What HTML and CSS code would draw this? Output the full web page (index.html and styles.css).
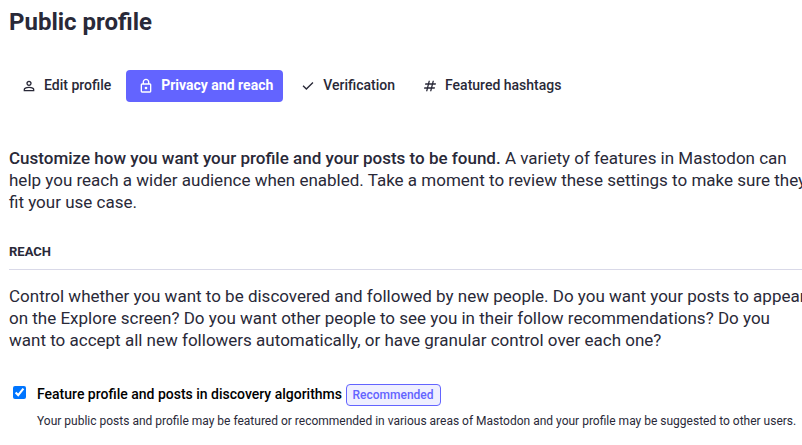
FILE: index.html
```html
<!doctype html>
<html lang="en">
<head>
<meta charset="utf-8">
<title>Public profile - Mastodon</title>
<link rel="stylesheet" href="styles.css">
</head>
<body>
<main class="content">
	<h1>Public profile</h1>
	<nav class="tabs">
		<a href="#profile"><svg viewBox="0 -960 960 960"><path d="M480-480q-66 0-113-47t-47-113q0-66 47-113t113-47q66 0 113 47t47 113q0 66-47 113t-113 47ZM160-160v-112q0-34 17.500-62.500T224-378q62-31 126-46.500T480-440q66 0 130 15.500T736-378q29 15 46.500 43.500T800-272v112H160Zm80-80h480v-32q0-11-5.500-20T700-306q-54-27-109-40.500T480-360q-56 0-111 13.500T260-306q-9 5-14.500 14t-5.500 20v32Zm240-320q33 0 56.500-23.500T560-640q0-33-23.500-56.500T480-720q-33 0-56.500 23.500T400-640q0 33 23.500 56.500T480-560Z"/></svg>Edit profile</a>
		<a class="selected" href="#privacy"><svg viewBox="0 -960 960 960"><path d="M240-80q-33 0-56.500-23.500T160-160v-400q0-33 23.500-56.500T240-640h40v-80q0-83 58.500-141.500T480-920q83 0 141.500 58.500T680-720v80h40q33 0 56.500 23.500T800-560v400q0 33-23.500 56.500T720-80H240Zm0-80h480v-400H240v400Zm240-120q33 0 56.500-23.500T560-360q0-33-23.500-56.500T480-440q-33 0-56.500 23.500T400-360q0 33 23.500 56.500T480-280ZM360-640h240v-80q0-50-35-85t-85-35q-50 0-85 35t-35 85v80Z"/></svg>Privacy and reach</a>
		<a href="#verification"><svg viewBox="0 -960 960 960"><path d="M382-240 154-468l57-57 171 171 367-367 57 57-424 424Z"/></svg>Verification</a>
		<a href="#tags"><svg viewBox="0 -960 960 960"><path d="m240-160 40-160H120l20-80h160l40-160H180l20-80h160l40-160h80l-40 160h160l40-160h80l-40 160h160l-20 80H660l-40 160h160l-20 80H600l-40 160h-80l40-160H360l-40 160h-80Zm140-240h160l40-160H420l-40 160Z"/></svg>Featured hashtags</a>
	</nav>
	<form>
		<p class="lead"><strong>Customize how you want your profile and your posts to be found.</strong> A variety of features in Mastodon can help you reach a wider audience when enabled. Take a moment to review these settings to make sure they fit your use case.</p>
		<h2>Reach</h2>
		<p class="lead">Control whether you want to be discovered and followed by new people. Do you want your posts to appear on the Explore screen? Do you want other people to see you in their follow recommendations? Do you want to accept all new followers automatically, or have granular control over each one?</p>
		<div class="field">
			<input type="checkbox" id="discoverable" aria-describedby="hint" checked>
			<div>
				<label for="discoverable">Feature profile and posts in discovery algorithms <span class="recommended">Recommended</span></label>
				<p class="hint" id="hint">Your public posts and profile may be featured or recommended in various areas of Mastodon and your profile may be suggested to other users.</p>
			</div>
		</div>
	</form>
</main>
</body>
</html>
```

FILE: styles.css
```css
body{margin:0; background:#fff; color:#292938; font-family:Roboto,sans-serif; font-size:14px; overflow-x:hidden;}
h1,h2,p{margin:0;}
.content{padding:7px 0 16px 9px; margin-right:-7px;}
h1{font-size:24px; line-height:30px; font-weight:700;}
.tabs{display:flex; gap:5px; margin:33px 0 45px;}
.tabs a{display:flex; align-items:flex-start; gap:7px; padding:8px 10px 8px 12px; line-height:14px; font-weight:500; color:#292938; text-decoration:none; border-radius:4px;}
.tabs svg{width:16px; height:16px; fill:currentColor;}
.tabs .selected{background:#6364ff; color:#fff; font-weight:700;}
.lead{font-size:17px; line-height:22px;}
.lead strong{font-weight:500;}
h2{margin:31px 0 15px; padding-bottom:9px; border-bottom:1px solid #d9d9e8; font-size:13px; line-height:16px; font-weight:700; text-transform:uppercase;}
.field{display:flex; gap:11px; margin-top:33px; padding-left:4px;}
.field input{width:13px; height:13px; margin:2px 0 0; flex:none;}
.field label{display:block; line-height:20px; font-weight:500; color:#000;}
.recommended{display:inline-block; padding:0 6px; border:1px solid #6364ff; border-radius:4px; background:#efefff; color:#6364ff; font-size:12px; line-height:20px;}
.hint{margin-top:6px; font-size:12px; line-height:18px;}
```
